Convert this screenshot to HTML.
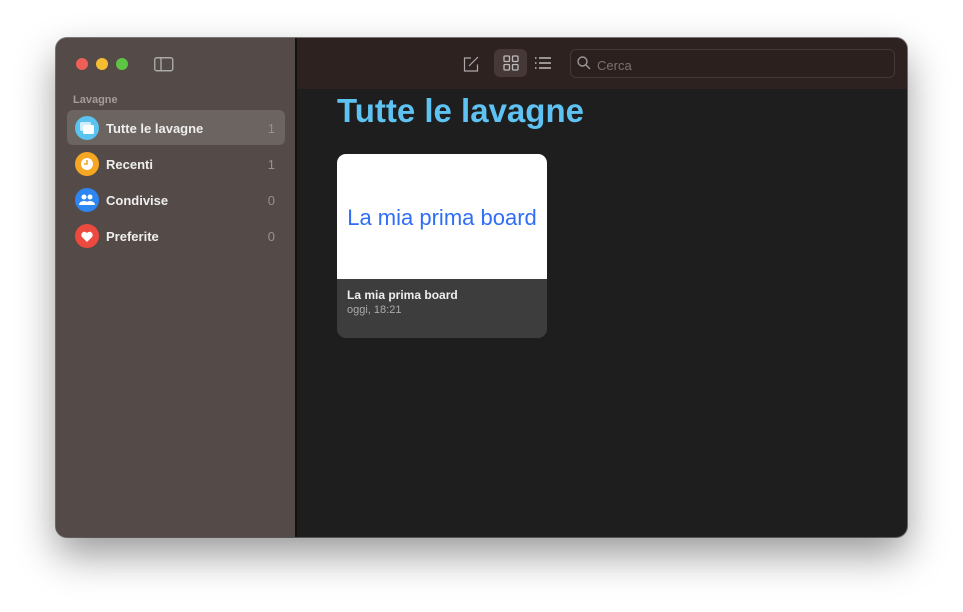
<!DOCTYPE html><html><head><style>
body{margin:0;width:963px;height:612px;background:#fff;font-family:"Liberation Sans",sans-serif;position:relative;overflow:hidden}
.win{position:absolute;left:56px;top:38px;width:851px;height:499px;border-radius:11px;overflow:hidden;background:#1e1e1e;box-shadow:0 18px 40px rgba(0,0,0,.4),0 0 0 1px rgba(0,0,0,.5)}
.side{position:absolute;left:0;top:0;width:239px;height:499px;background:#544b48;border-right:2px solid #111}
.dot{position:absolute;top:20px;width:12px;height:12px;border-radius:50%}
.tb{position:absolute;left:241px;top:0;right:0;height:51px;background:#2e2220}
.item{position:absolute;left:11px;width:218px;height:35px;border-radius:6px;color:#eee;font-size:13px;font-weight:bold}
.item .ic{position:absolute;left:8px;top:6px;width:24px;height:24px;border-radius:50%}
.item .t{position:absolute;left:39px;top:11px}
.item .n{position:absolute;right:10px;top:11px;color:#9a918e;font-weight:normal}
</style></head><body>
<div class="win">
<div class="side">
<div class="dot" style="left:20px;background:#ed5f57"></div>
<div class="dot" style="left:40px;background:#f4bd32"></div>
<div class="dot" style="left:60px;background:#5fc443"></div>
<svg style="position:absolute;left:98px;top:18px" width="20" height="16"><rect x="0.75" y="1.75" width="18" height="13" rx="2" fill="none" stroke="#aaa" stroke-width="1.4"/><line x1="7" y1="2" x2="7" y2="14" stroke="#aaa" stroke-width="1.4"/></svg>
<div style="position:absolute;left:17px;top:56px;font-size:11px;color:#a59c98;font-weight:bold">Lavagne</div>
<div class="item" style="top:72px;background:#6c6461"><div class="ic" style="background:#5ac3f0"><svg width="24" height="24"><rect x="5" y="6" width="11" height="9" rx="1.5" fill="#cdeefc"/><rect x="8" y="9" width="11" height="9" rx="1.5" fill="#fff"/></svg></div><span class="t">Tutte le lavagne</span><span class="n">1</span></div>
<div class="item" style="top:108px"><div class="ic" style="background:#f5a623"><svg width="24" height="24"><circle cx="12" cy="12" r="6" fill="#fff"/><path d="M12 8v4h-3" stroke="#f5a623" stroke-width="1.6" fill="none"/></svg></div><span class="t">Recenti</span><span class="n">1</span></div>
<div class="item" style="top:144px"><div class="ic" style="background:#2e86f0"><svg width="24" height="24" fill="#fff"><circle cx="9" cy="9" r="2.5"/><circle cx="15" cy="9" r="2.5"/><path d="M4 17a5 4 0 0 1 10 0z"/><path d="M10 17a5 4 0 0 1 10 0z"/></svg></div><span class="t">Condivise</span><span class="n">0</span></div>
<div class="item" style="top:180px"><div class="ic" style="background:#ec4a3f"><svg width="24" height="24"><path d="M12 18l-5-5a3 3 0 0 1 5-4a3 3 0 0 1 5 4z" fill="#fff"/></svg></div><span class="t">Preferite</span><span class="n">0</span></div>
</div>
<div class="tb">
<svg style="position:absolute;left:165px;top:17px" width="18" height="18" fill="none" stroke="#aaa" stroke-width="1.2"><path d="M9 3H2.5v13h13V9.5"/><path d="M7 11l9-9"/></svg>
<div style="position:absolute;left:197px;top:11px;width:33px;height:28px;border-radius:6px;background:#453836"></div>
<svg style="position:absolute;left:206px;top:17px" width="16" height="16" fill="none" stroke="#bbb" stroke-width="1.3"><rect x="1" y="1" width="5.5" height="5.5" rx="1"/><rect x="9.5" y="1" width="5.5" height="5.5" rx="1"/><rect x="1" y="9.5" width="5.5" height="5.5" rx="1"/><rect x="9.5" y="9.5" width="5.5" height="5.5" rx="1"/></svg>
<svg style="position:absolute;left:237px;top:18px" width="18" height="14" stroke="#bbb" stroke-width="1.4"><path d="M5 2h12M5 7h12M5 12h12M1 2h1.5M1 7h1.5M1 12h1.5"/></svg>
<div style="position:absolute;left:273px;top:11px;width:323px;height:27px;border:1px solid #44383a;border-radius:6px;background:#2b201e"></div>
<svg style="position:absolute;left:280px;top:18px" width="14" height="14" fill="none" stroke="#999" stroke-width="1.4"><circle cx="5.5" cy="5.5" r="4.5"/><path d="M9 9l4 4"/></svg>
<div style="position:absolute;left:300px;top:20px;font-size:13px;color:#7b716e">Cerca</div>
</div>
<div style="position:absolute;left:281px;top:54px;font-size:33px;font-weight:bold;color:#5ec3f2">Tutte le lavagne</div>
<div style="position:absolute;left:281px;top:116px;width:210px;height:184px;border-radius:9px;overflow:hidden;background:#3d3d3d">
<div style="height:125px;background:#fff;color:#2f6ef5;font-size:22px;text-align:center;line-height:128px">La mia prima board</div>
<div style="position:absolute;left:10px;top:134px;color:#eee;font-size:12px;font-weight:bold">La mia prima board</div>
<div style="position:absolute;left:10px;top:150px;color:#aaa;font-size:11px">oggi, 18:21</div>
</div>
</div>
</body></html>
